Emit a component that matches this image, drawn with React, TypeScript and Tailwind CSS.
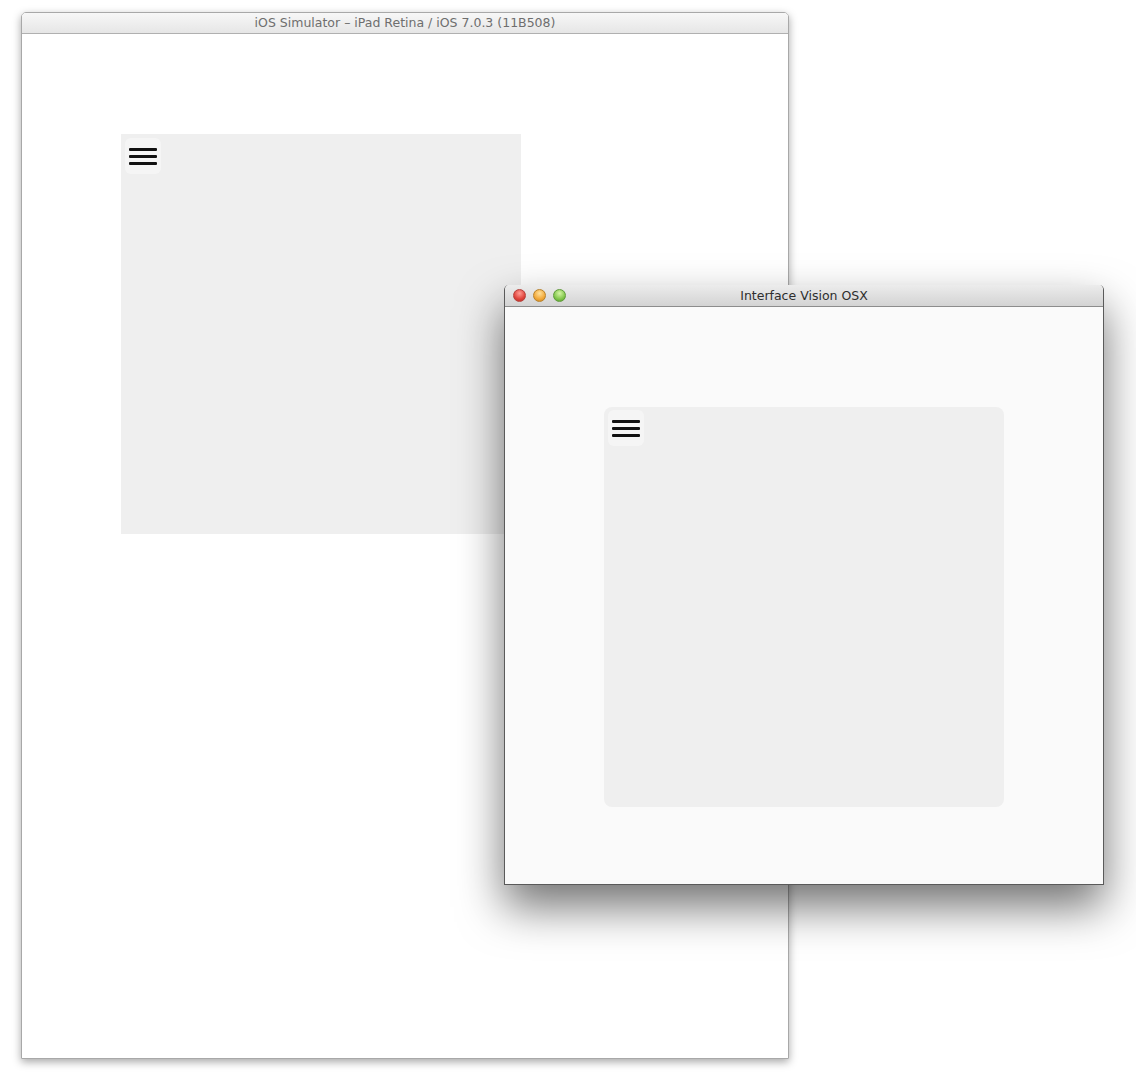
import { ReactNode } from "react";

const Hamburger = () => (
  <div className="flex h-9 w-9 flex-col items-center justify-center gap-1 rounded-md bg-[#f5f5f5]">
    <span className="h-[3px] w-7 rounded-[1px] bg-[#111]" />
    <span className="h-[3px] w-7 rounded-[1px] bg-[#111]" />
    <span className="h-[3px] w-7 rounded-[1px] bg-[#111]" />
  </div>
);

const Panel = ({ rounded }: { rounded?: boolean }) => (
  <div
    className={
      "h-[400px] w-[400px] bg-[#efefef] " + (rounded ? "rounded-lg p-[4px] pt-[3px]" : "p-[4px]")
    }
  >
    <Hamburger />
  </div>
);

const TrafficLights = () => (
  <div className="absolute left-[8px] top-[4px] flex gap-[7px]">
    <span className="h-[13px] w-[13px] rounded-full border border-[#b4413b] bg-[radial-gradient(circle_at_50%_30%,#ff9c94,#e0443c_60%,#b42c25)]" />
    <span className="h-[13px] w-[13px] rounded-full border border-[#b7812a] bg-[radial-gradient(circle_at_50%_30%,#ffe09a,#f2a93a_60%,#c8821d)]" />
    <span className="h-[13px] w-[13px] rounded-full border border-[#5f9a3a] bg-[radial-gradient(circle_at_50%_30%,#d4f5a4,#83c74c_60%,#4f9a2a)]" />
  </div>
);

const Window = ({
  title,
  active,
  children,
  className,
}: {
  title: string;
  active?: boolean;
  children: ReactNode;
  className: string;
}) => (
  <div className={"absolute flex flex-col overflow-hidden rounded-t-[5px] " + className}>
    <div
      className={
        "relative flex shrink-0 items-center justify-center border-b pt-[1px] text-[12.5px] " +
        (active
          ? "h-[22px] border-[#8c8c8c] bg-[linear-gradient(#ececec,#d3d3d3)] text-[#2e2e2e]"
          : "h-[21px] border-[#b0b0b0] bg-[linear-gradient(#f7f7f7,#e6e6e6)] text-[#6e6e6e]")
      }
    >
      {active && <TrafficLights />}
      <span>{title}</span>
    </div>
    {children}
  </div>
);

export default function App() {
  return (
    <div className="relative h-[1088px] w-[1136px] overflow-hidden bg-white font-['DejaVu_Sans',sans-serif]">
      <Window
        title="iOS Simulator – iPad Retina / iOS 7.0.3 (11B508)"
        className="left-[21px] top-[12px] w-[768px] border border-[#a8a8a8] shadow-[0_3px_8px_rgba(0,0,0,0.35)]"
      >
        <div className="h-[1024px] bg-white pl-[99px] pt-[100px]">
          <Panel />
        </div>
      </Window>

      <Window
        title="Interface Vision OSX"
        active
        className="left-[504px] top-[285px] w-[600px] border-x border-b border-[#5a5a5a] border-t-[#bdbdbd] shadow-[0_22px_45px_rgba(0,0,0,0.55)]"
      >
        <div className="h-[577px] bg-[#fafafa] pl-[99px] pt-[100px]">
          <Panel rounded />
        </div>
      </Window>
    </div>
  );
}
